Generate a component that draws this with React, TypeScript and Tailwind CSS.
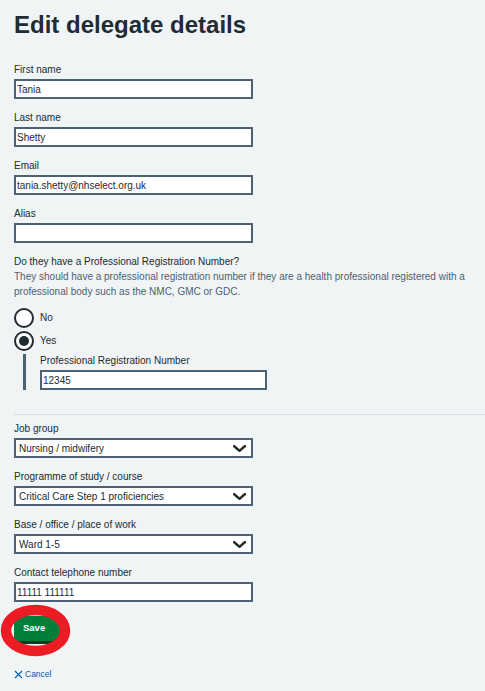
import React from 'react';

const TextField: React.FC<{ label: string; value?: string; className?: string }> = ({ label, value = '', className = '' }) => (
  <div className={`mb-[12px] ${className}`}>
    <label className="block text-[10px] leading-[14px] mb-[2px]">{label}</label>
    <input
      type="text"
      defaultValue={value}
      className="block w-[239px] h-[20px] border-2 border-[#4c6272] bg-white px-[1px] text-[10px] text-[#212b32] outline-none"
    />
  </div>
);

const SelectField: React.FC<{ label: string; value: string }> = ({ label, value }) => (
  <div className="mb-[12px]">
    <label className="block text-[10px] leading-[14px] mb-[2px]">{label}</label>
    <div className="relative w-[239px] h-[20px]">
      <select
        defaultValue={value}
        className="block w-full h-full appearance-none border-2 border-[#4c6272] bg-white pl-[3px] pr-6 text-[10px] text-[#212b32] outline-none"
      >
        <option>{value}</option>
      </select>
      <svg className="absolute right-[7px] top-[7px] pointer-events-none" width="13" height="7" viewBox="0 0 13 7" fill="none">
        <path d="M1 1 L6.5 5.8 L12 1" stroke="#212b32" strokeWidth="2.4" strokeLinecap="round" strokeLinejoin="round" />
      </svg>
    </div>
  </div>
);

const Radio: React.FC<{ label: string; checked?: boolean }> = ({ label, checked }) => (
  <div className="flex items-center h-[23px]">
    <span className="flex items-center justify-center w-[20px] h-[20px] rounded-full border-2 border-[#212b32] bg-white">
      {checked && <span className="w-[10px] h-[10px] rounded-full bg-[#212b32]" />}
    </span>
    <span className="ml-[6px] text-[10px] leading-[14px]">{label}</span>
  </div>
);

export default function App() {
  return (
    <div className="min-h-[691px] bg-[#f0f4f5] text-[#212b32] font-['Liberation_Sans',Arial,sans-serif]">
      <div className="pt-[9px] pl-[14px]">
        <h1 className="text-[24px] leading-[32px] font-bold">Edit delegate details</h1>

        <div className="mt-[22px]">
          <TextField label="First name" value="Tania" />
          <TextField label="Last name" value="Shetty" />
          <TextField label="Email" value="tania.shetty@nhselect.org.uk" />
          <TextField label="Alias" />

          <div>
            <p className="text-[10px] leading-[14px]">Do they have a Professional Registration Number?</p>
            <p className="text-[10px] leading-[15px] text-[#4c6272] pr-[14px]">
              They should have a professional registration number if they are a health professional registered with a professional body such as the NMC, GMC or GDC.
            </p>
            <div className="mt-[7px]">
              <Radio label="No" />
              <Radio label="Yes" checked />
            </div>
            <div className="mt-[2px] ml-[9px] border-l-[3px] border-[#4c6272] pl-[14px]">
              <label className="block text-[10px] leading-[14px] mb-[2px]">Professional Registration Number</label>
              <input
                type="text"
                defaultValue="12345"
                className="block w-[227px] h-[20px] border-2 border-[#4c6272] bg-white px-[1px] text-[10px] text-[#212b32] outline-none"
              />
            </div>
          </div>

          <hr className="mt-[24px] border-t border-[#d8dde0]" />

          <div className="mt-[7px]">
            <SelectField label="Job group" value="Nursing / midwifery" />
            <SelectField label="Programme of study / course" value="Critical Care Step 1 proficiencies" />
            <SelectField label="Base / office / place of work" value="Ward 1-5" />
            <TextField label="Contact telephone number" value="11111 111111" className="mb-0" />
          </div>

          <div className="relative mt-[14px] w-[50px]">
            <button className="block w-[50px] h-[25px] pl-[9px] text-left bg-[#007f3b] shadow-[0_3px_0_#00401e] text-white text-[9.5px] font-bold">
              Save
            </button>
            <svg className="absolute left-[-14px] top-[-15px] pointer-events-none" width="75" height="60" viewBox="0 0 75 60">
              <ellipse cx="35.5" cy="29.5" rx="29.5" ry="20.5" fill="none" stroke="#ec1c24" strokeWidth="10.5" />
            </svg>
          </div>

          <a href="#" className="mt-[27px] flex items-center gap-[2px] text-[8.5px] leading-[12px] text-[#005eb8]">
            <svg width="9" height="9" viewBox="0 0 9 9" fill="none">
              <path d="M1 1 L8 8 M8 1 L1 8" stroke="#005eb8" strokeWidth="1.1" />
            </svg>
            Cancel
          </a>
        </div>
      </div>
    </div>
  );
}
